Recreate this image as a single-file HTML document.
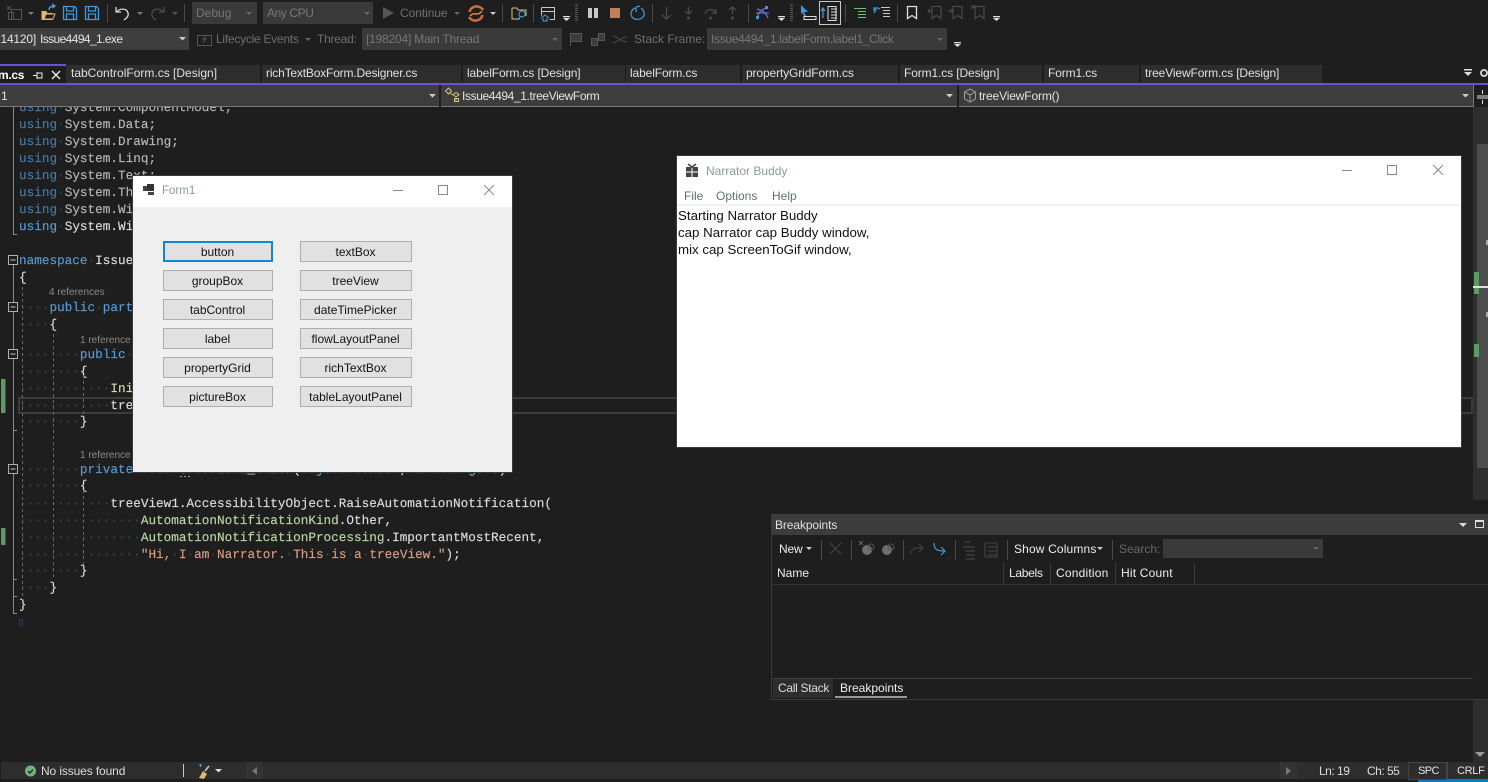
<!DOCTYPE html>
<html><head><meta charset="utf-8"><style>
html,body{margin:0;padding:0;background:#1e1e1e;width:1488px;height:782px;overflow:hidden}
body{position:relative;font-family:"Liberation Sans",sans-serif;font-size:12px;color:#dcdcdc}
.a{position:absolute}
.t{position:absolute;white-space:pre;line-height:16px;height:16px}
.dim{color:#6e6e6e}
.g{color:#7f7f7f}
.c{position:absolute;left:19px;white-space:pre;font-family:"Liberation Mono",monospace;font-size:12.7px;line-height:17px;height:17px;color:#dcdcdc;-webkit-text-stroke:.15px;text-rendering:geometricPrecision}
.c i{font-style:normal;color:#2c4a5c}.k{color:#569cd6}.k2{color:#457aa8}.d{color:#b8b8b8}.e{color:#b8d7a3}.s{color:#d69d85}.y{color:#dcdcaa}
.r{position:absolute;white-space:pre;font-size:10px;color:#8a8a8a;line-height:12px}
.tab{position:absolute;top:65px;height:18px;background:#2d2d2d;color:#e0e0e0;line-height:17px;padding-left:4px;box-sizing:border-box;white-space:pre;letter-spacing:-.12px}
.btn{position:absolute;box-sizing:border-box;height:21px;background:#e1e1e1;border:1px solid #adadad;color:#111;text-align:center;line-height:20px;font-size:12px;white-space:pre;padding-right:1px}
.s1{position:absolute;width:1px;background:#4a4a4a}
.n{font-size:13.3px;color:#111}
</style></head><body>

<!-- toolbars -->
<div class="a" style="left:192px;top:2px;width:65px;height:22px;background:#3a3a3a"></div>
<div class="a" style="left:263px;top:2px;width:110px;height:22px;background:#3a3a3a"></div>
<div class="t g" style="left:196px;top:5px;color:#777">Debug</div>
<div class="t g" style="left:267px;top:5px;color:#777;letter-spacing:-.4px">Any CPU</div>
<div class="t" style="left:400px;top:5px;color:#6f6f6f;letter-spacing:-.05px">Continue</div>
<div class="a" style="left:0;top:28px;width:189px;height:22px;background:#3e3e3e"></div>
<div class="t" style="left:-6px;top:31px;color:#e4e4e4;letter-spacing:-.2px">214120]</div>
<div class="t" style="left:40px;top:31px;color:#e4e4e4;letter-spacing:-.6px">Issue4494_1.exe</div>
<div class="t" style="left:216px;top:31px;color:#6f6f6f;letter-spacing:-.25px">Lifecycle Events</div>
<div class="t" style="left:317px;top:31px;color:#6f6f6f;letter-spacing:-.25px">Thread:</div>
<div class="a" style="left:362px;top:28px;width:200px;height:22px;background:#3a3a3a"></div>
<div class="t" style="left:366px;top:31px;color:#777;letter-spacing:-.2px">[198204] Main Thread</div>
<div class="t" style="left:634px;top:31px;color:#6f6f6f">Stack Frame:</div>
<div class="a" style="left:707px;top:28px;width:240px;height:22px;background:#3a3a3a"></div>
<div class="t" style="left:711px;top:31px;color:#777;letter-spacing:-.32px">Issue4494_1.labelForm.label1_Click</div>

<!-- code -->
<div class="c" style="top:99px"><span class="k2">using</span><i>·</i><span class="d">System.ComponentModel;</span></div>
<div class="c" style="top:116px"><span class="k2">using</span><i>·</i><span class="d">System.Data;</span></div>
<div class="c" style="top:133px"><span class="k2">using</span><i>·</i><span class="d">System.Drawing;</span></div>
<div class="c" style="top:150px"><span class="k2">using</span><i>·</i><span class="d">System.Linq;</span></div>
<div class="c" style="top:167px"><span class="k2">using</span><i>·</i><span class="d">System.Text;</span></div>
<div class="c" style="top:184px"><span class="k2">using</span><i>·</i><span class="d">System.Threading.Tasks;</span></div>
<div class="c" style="top:201px"><span class="k2">using</span><i>·</i><span class="d">System.Windows.Forms;</span></div>
<div class="c" style="top:218px"><span class="k">using</span><i>·</i>System.Windows.Forms;</div>
<div class="c" style="top:252px"><span class="k">namespace</span><i>·</i>Issue4494_1</div>
<div class="c" style="top:269px">{</div>
<div class="r" style="left:49px;top:287px">4 references</div>
<div class="c" style="top:299px"><i>····</i><span class="k">public</span><i>·</i><span class="k">partial</span><i>·</i><span class="k">class</span></div>
<div class="c" style="top:316px"><i>····</i>{</div>
<div class="r" style="left:80px;top:335px">1 reference</div>
<div class="c" style="top:346px"><i>········</i><span class="k">public</span><i>·</i>treeViewForm()</div>
<div class="c" style="top:363px"><i>········</i>{</div>
<div class="c" style="top:380px"><i>············</i><span class="y">Ini</span>tializeComponent();</div>
<div class="a" style="left:18px;top:397px;width:1455px;height:17px;box-sizing:border-box;border:2px solid #3c3c3c"></div>
<div class="c" style="top:397px"><i>············</i>treeView1.Text;</div>
<div class="c" style="top:413px"><i>········</i>}</div>
<div class="r" style="left:80px;top:450px">1 reference</div>
<div class="c" style="top:461px"><i>········</i><span class="k">private</span><i>·</i><span class="k">void</span><i>·</i>treeView1_Click(<span class="k">object</span><i>·</i>sender,<i>·</i><span style="color:#4ec9b0">EventArgs</span><i>·</i>e)</div>
<div class="c" style="top:477px"><i>········</i>{</div>
<div class="c" style="top:495px"><i>············</i>treeView1.AccessibilityObject.RaiseAutomationNotification(</div>
<div class="c" style="top:512px"><i>················</i><span class="e">AutomationNotificationKind</span>.Other,</div>
<div class="c" style="top:529px"><i>················</i><span class="e">AutomationNotificationProcessing</span>.ImportantMostRecent,</div>
<div class="c" style="top:546px"><i>················</i><span class="s">"Hi,<i>·</i>I<i>·</i>am<i>·</i>Narrator.<i>·</i>This<i>·</i>is<i>·</i>a<i>·</i>treeView."</span>);</div>
<div class="c" style="top:562px"><i>········</i>}</div>
<div class="c" style="top:579px"><i>····</i>}</div>
<div class="c" style="top:596px">}</div>

<!-- gutter + guides -->
<svg class="a" style="left:0;top:0" width="1488" height="782" fill="none">
<rect x="1" y="379" width="4.5" height="34" fill="#5b9a62"/><rect x="1" y="528" width="4.5" height="17" fill="#5b9a62"/>
<path d="M13.5 100V234.5H17M13.5 265V613.5H17M13.5 430.5H17M13.5 579.5H17M13.5 596.5H17" stroke="#8a8a8a"/>
<path d="M22.5 287V600M53.5 334V580M83.5 375V415M83.5 490V565" stroke="#666" stroke-dasharray="3 3"/>
<g fill="#1e1e1e" stroke="#b0b0b0"><rect x="8.500" y="255.500" width="9" height="9"/><rect x="8.500" y="302.500" width="9" height="9"/><rect x="8.500" y="349.500" width="9" height="9"/><rect x="8.500" y="464.500" width="9" height="9"/></g>
<path d="M10.500 260H15.500M10.500 307H15.500M10.500 354H15.500M10.500 469H15.500" stroke="#c8c8c8"/>
<rect x="19.500" y="619.500" width="3" height="6" stroke="#1f4050"/>
<path d="M180 476.500h2M184 476.500h2M188 476.500h2" stroke="#999"/>
</svg>

<!-- tabs -->
<div class="a" style="left:0;top:64px;width:66px;height:2px;background:#6d4fd3"></div>
<div class="t" style="left:-2px;top:67px;color:#fff;font-weight:bold;letter-spacing:-.3px">m.cs</div>
<div class="tab" style="left:66px;width:194px;padding-left:5px;letter-spacing:0">tabControlForm.cs [Design]</div>
<div class="tab" style="left:262px;width:199px;letter-spacing:-.18px">richTextBoxForm.Designer.cs</div>
<div class="tab" style="left:463px;width:162px">labelForm.cs [Design]</div>
<div class="tab" style="left:626px;width:114px">labelForm.cs</div>
<div class="tab" style="left:742px;width:156px">propertyGridForm.cs</div>
<div class="tab" style="left:900px;width:142px">Form1.cs [Design]</div>
<div class="tab" style="left:1044px;width:95px">Form1.cs</div>
<div class="tab" style="left:1141px;width:181px">treeViewForm.cs [Design]</div>
<div class="a" style="left:0;top:83px;width:1488px;height:2px;background:#6d4fd3"></div>

<!-- nav bar -->
<div class="a" style="left:0;top:85px;width:1488px;height:21px;background:#3d3d3d"></div>
<div class="a" style="left:0;top:106px;width:1473px;height:1px;background:#7a7a7a"></div>
<div class="a" style="left:439px;top:85px;width:2px;height:22px;background:#1e1e1e"></div>
<div class="a" style="left:957px;top:85px;width:2px;height:22px;background:#1e1e1e"></div>
<div class="a" style="left:1473px;top:85px;width:1px;height:22px;background:#7a7a7a"></div>
<div class="a" style="left:1474px;top:85px;width:14px;height:22px;background:#1e1e1e"></div>
<div class="t" style="left:1px;top:88px;color:#e4e4e4">1</div>
<div class="t" style="left:462px;top:88px;color:#e4e4e4;letter-spacing:-.38px">Issue4494_1.treeViewForm</div>
<div class="t" style="left:979px;top:88px;color:#e4e4e4;letter-spacing:-.15px">treeViewForm()</div>

<!-- scrollbar -->
<div class="a" style="left:1473px;top:107px;width:15px;height:393px;background:#2e2e2e"></div>
<div class="a" style="left:1477px;top:144px;width:11px;height:324px;background:#4d4d4d"></div>
<div class="a" style="left:1474px;top:272px;width:5px;height:22px;background:#5b9a62"></div>
<div class="a" style="left:1474px;top:344px;width:5px;height:13px;background:#5b9a62"></div>
<div class="a" style="left:1473px;top:286px;width:15px;height:2px;background:#dedede"></div>
<div class="a" style="left:1486px;top:240px;width:2px;height:5px;background:#aaa"></div>
<div class="a" style="left:1486px;top:312px;width:2px;height:5px;background:#aaa"></div>

<!-- toolbar icons -->
<svg class="a" style="left:0;top:0" width="1488" height="107" fill="none">
<!-- new -->
<g stroke="#555"><rect x="11.500" y="9.500" width="10" height="10"/><rect x="8.500" y="12.500" width="5" height="7"/><path d="M7 6l4 4M11 6l-4 4"/></g>
<g fill="#7a7a7a"><path d="M28 12h6l-3 3zM137 12h6l-3 3z"/></g><path d="M172 12h6l-3 3z" fill="#555"/>
<!-- open -->
<path d="M42 11.500h4l1 2h5v6H42z" fill="#dcb67a" stroke="#dcb67a"/><path d="M44 19l2-5h9l-2 5z" fill="#1e1e1e" stroke="#dcb67a"/><path d="M49 10c0-3 2-4 5-4M52 4l3 2-3 2" stroke="#4a9fe0" stroke-width="1.300"/>
<!-- save -->
<g stroke="#3f97dc" stroke-width="1.300"><path d="M63.500 6.500h11l2 2v11h-13zM66.500 7v4h7V7M66.500 19v-5h7v5"/><path d="M85.500 6.500h11l2 2v11h-13zM88.500 7v4h7V7M88.500 19v-5h7v5"/></g>
<path d="M107.500 4v18M184.500 4v18M502.500 4v18M533.500 4v18M652.500 4v18M748.500 4v18M845.500 4v18M897.500 4v18" stroke="#4a4a4a"/>
<!-- undo/redo -->
<path d="M117 12c2-4 10-4 11 1 1 3-1 5-4 7M116 7v5h5" stroke="#d8d8d8" stroke-width="1.300"/>
<path d="M163 12c-2-4-10-4-11 1-1 3 1 5 4 7M164 7v5h-5" stroke="#4d4d4d" stroke-width="1.300"/>
<!-- continue -->
<path d="M383 7l11 6-11 6z" fill="#555"/><path d="M454 12h6l-3 3z" fill="#666"/>
<path d="M246 12h6l-3 3zM364 12h6l-3 3z" fill="#6a6a6a"/>
<path d="M469.500 12c1-5 7-7 11-4.500 1 .6 2 1.500 2.500 2.500M482.500 15c-1 5-7 7-11 4.500-1-.6-2-1.500-2.500-2.500" stroke="#c9703c" stroke-width="2.500"/><path d="M470 16c4-5 8 1 12-5" stroke="#d88a50" stroke-width="1.500"/><path d="M490 12h6l-3 3z" fill="#ccc"/>
<!-- find -->
<path d="M512 8h5l1 2h8v6M512 8v11h8" stroke="#d7c27a"/><circle cx="522" cy="14" r="3" stroke="#4a9fe0"/><path d="M520 17l-3 3" stroke="#4a9fe0"/>
<!-- window -->
<path d="M541.500 7.500h13v12h-5M541.500 7.500v8M541.500 11.500h13" stroke="#c8c8c8"/><path d="M541 18l4-3 4 3M543 18v3h4v-3" stroke="#4a9fe0"/>
<path d="M563 16h7v1.200h-7zM563 18l3.500 3 3.500-3zM778 16h7v1.200h-7zM778 18l3.500 3 3.500-3zM993 16h7v1.200h-7zM993 18l3.500 3 3.500-3zM954 42h7v1.200h-7zM954 44l3.500 3 3.500-3z" fill="#ddd"/>
<path d="M576.500 4v18M791.500 4v18" stroke="#555" stroke-dasharray="1 1" stroke-width="3"/>
<!-- pause stop restart -->
<rect x="588" y="8" width="4" height="10" fill="#c8c8c8"/><rect x="594" y="8" width="4" height="10" fill="#c8c8c8"/><rect x="610" y="8" width="10" height="10" fill="#c27f5c"/>
<path d="M641 8c4 3 4 8 1 10-3 2-8 2-10-1-2-3-1-7 3-9M636 7v5M636 7l4-1" stroke="#3f97dc" stroke-width="1.300"/>
<!-- step -->
<g stroke="#4a4a4a" stroke-width="1.300"><path d="M666.500 7v12M662 15l4.500 4 4.500-4M688.500 7v7M685 11l3.500 3 3.500-3M732.500 7v7M729 10l3.500-3 3.500 3M705 14c1-5 8-6 11-1M716 9v4h-4"/></g><circle cx="688.500" cy="18" r="1.500" fill="#4a4a4a"/><circle cx="732.500" cy="18" r="1.500" fill="#4a4a4a"/><circle cx="710.500" cy="18" r="1.500" fill="#4a4a4a"/>
<!-- diag -->
<path d="M757 18c3-9 6-9 11-10M757 9c3 1 8 2 11 9" stroke="#7a63d8" stroke-width="1.300"/><path d="M756 13h13" stroke="#3f97dc"/><rect x="756" y="16" width="3" height="3" fill="#3f97dc"/><rect x="765" y="6" width="3" height="3" fill="#3f97dc"/>
<!-- cursor -->
<path d="M801 5l7 7h-4l2 4-2 0-2-4-1 3z" fill="#3f97dc"/><path d="M804 16.500h12v3h-12z" stroke="#ddd"/>
<rect x="819.500" y="1.500" width="21" height="23" stroke="#c8c8c8"/>
<path d="M823 18v-9M821 11l2-3 2 3" stroke="#3f97dc" stroke-width="1.300"/><path d="M828 6.500h8v14h-8zM831 9h6M831 12h6M831 15h6M831 18h6" stroke="#ddd"/>
<path d="M854 8.500h12M858 11.500h8M858 14.500h8M858 17.500h8" stroke="#6fc16f"/>
<path d="M881 7.500h9M883 10.500h7M883 13.500h7M883 16.500h7" stroke="#c8c8c8"/><path d="M880 9c-5-3-7 1-5 4M874 7v3h3" stroke="#3f97dc" stroke-width="1.200"/>
<!-- bookmarks -->
<path d="M907.500 6.500h9v12l-4.500-3-4.500 3z" stroke="#e0e0e0" stroke-width="1.300"/>
<g stroke="#4a4a4a" stroke-width="1.200"><path d="M932 6.500h9v12l-4.500-3-4.500 3zM928 11h4M928 11l2-2M928 11l2 2"/><path d="M953 6.500h9v12l-4.500-3-4.500 3zM948 11h5M953 11l-2-2M953 11l-2 2"/><path d="M975 6.500h9v12l-4.500-3-4.500 3zM971 5l4 4M975 5l-4 4"/></g>
<!-- row 2 -->
<path d="M197.500 35.500h14v10h-14zM203 43l3-4h-3l3-3" stroke="#555"/>
<path d="M305 38h6l-3 3z" fill="#666"/><path d="M552 38h6l-3 3zM937 38h6l-3 3z" fill="#666"/>
<path d="M179 37h7l-3.500 3.500z" fill="#ccc"/>
<path d="M570.500 33v13" stroke="#555"/><rect x="570.500" y="33.500" width="11" height="8" fill="#3c3c3c" stroke="#555"/><rect x="591.500" y="38.500" width="6" height="7" fill="#3c3c3c" stroke="#555"/><rect x="598.500" y="33.500" width="6" height="7" fill="#3c3c3c" stroke="#555"/>
<path d="M613 36c5 1 9 6 14 6M613 43c5-1 9-6 14-6" stroke="#4a4a4a"/>
<!-- tabs -->
<path d="M33 75.500h4M37 73h5v5h-5zM37 72v7" stroke="#eee"/><path d="M52 71l8 8M60 71l-8 8" stroke="#eee" stroke-width="1.400"/>
<path d="M1464 69h8v1.500h-8zM1464 72h8l-4 4z" fill="#ddd"/><circle cx="1484" cy="73" r="3" stroke="#ccc" stroke-width="2"/>
<!-- nav -->
<path d="M429 94h7l-3.500 3.500zM946 94h7l-3.500 3.500zM1462 94h7l-3.500 3.500z" fill="#ccc"/>
<path d="M445.500 91l3-3 3 3-3 3zM450 93l3 2M453 94.500l3-2 3 2-3 2.500zM456 98v2.500" stroke="#d7c27a"/><rect x="454.500" y="98.500" width="4" height="3" stroke="#d7c27a"/>
<path d="M964.500 92l5.500-3 5.500 3v7l-5.500 3-5.500-3zM964.500 92l5.500 3 5.500-3M970 95v7" stroke="#9a9a9a"/>
<path d="M1477 96h11M1477 98h11M1482.500 90v4M1482.500 100v4" stroke="#ddd"/>
<path d="M1478 118l4.500-4 4.500 4z" fill="#8a8a8a"/>
</svg>

<!-- Form1 -->
<div class="a" style="left:132px;top:175px;width:381px;height:298px;box-sizing:border-box;border:1px solid #3a3a3a;background:#efefef">
<div class="a" style="left:0;top:0;width:379px;height:31px;background:#fff"></div>
<svg class="a" style="left:9px;top:7px" width="14" height="14"><rect x="1" y="3" width="4" height="5" fill="#444"/><rect x="5" y="1" width="7" height="7" fill="#333"/><rect x="6" y="9" width="6" height="3" fill="#444"/></svg>
<div class="t" style="left:29px;top:7px;color:#8a9a9a;font-size:11.5px">Form1</div>
<svg class="a" style="left:251px;top:1px" width="120" height="30" fill="none" stroke="#888"><path d="M9 13.500h10"/><rect x="54.500" y="8.500" width="9" height="9"/><path d="M100 8l10 10M110 8l-10 10"/></svg>
</div>
<div class="btn" style="left:163px;top:241px;width:110px;border:2px solid #1086d8;line-height:18px">button</div>
<div class="btn" style="left:163px;top:270px;width:110px">groupBox</div>
<div class="btn" style="left:163px;top:299px;width:110px">tabControl</div>
<div class="btn" style="left:163px;top:328px;width:110px">label</div>
<div class="btn" style="left:163px;top:357px;width:110px">propertyGrid</div>
<div class="btn" style="left:163px;top:386px;width:110px">pictureBox</div>
<div class="btn" style="left:300px;top:241px;width:112px">textBox</div>
<div class="btn" style="left:300px;top:270px;width:112px">treeView</div>
<div class="btn" style="left:300px;top:299px;width:112px">dateTimePicker</div>
<div class="btn" style="left:300px;top:328px;width:112px">flowLayoutPanel</div>
<div class="btn" style="left:300px;top:357px;width:112px">richTextBox</div>
<div class="btn" style="left:300px;top:386px;width:112px">tableLayoutPanel</div>

<!-- Narrator -->
<div class="a" style="left:676px;top:155px;width:786px;height:293px;box-sizing:border-box;border:1px solid #3a3a3a;background:#fff"></div>
<div class="a" style="left:677px;top:204px;width:784px;height:2px;background:#f0f0f0"></div>
<svg class="a" style="left:685px;top:163px" width="14" height="15" fill="none"><rect x="1" y="4" width="12" height="10" fill="#444"/><path d="M1 9h12M7 4v10" stroke="#fff"/><path d="M3 1l4 3 4-3" stroke="#444" stroke-width="1.500"/></svg>
<div class="t" style="left:706px;top:163px;color:#8a9a9a">Narrator Buddy</div>
<svg class="a" style="left:1340px;top:160px" width="110" height="22" fill="none" stroke="#888"><path d="M2 10.500h10"/><rect x="47.500" y="5.500" width="9" height="9"/><path d="M93 5l10 10M103 5l-10 10"/></svg>
<div class="t" style="left:684px;top:188px;color:#5f7070">File</div>
<div class="t" style="left:716px;top:188px;color:#5f7070">Options</div>
<div class="t" style="left:772px;top:188px;color:#5f7070">Help</div>
<div class="t n" style="left:678px;top:208px">Starting Narrator Buddy</div>
<div class="t n" style="left:678px;top:225px">cap Narrator cap Buddy window,</div>
<div class="t n" style="left:678px;top:242px">mix cap ScreenToGif window,</div>

<!-- Breakpoints -->
<div class="a" style="left:771px;top:514px;width:717px;height:186px;background:#1e1e1e;border-left:1px solid #3a3a3a;box-sizing:border-box;border-bottom:1px solid #3a3a3a"></div>
<div class="a" style="left:771px;top:514px;width:717px;height:21px;background:#3c3c3c"></div>
<div class="t" style="left:775px;top:517px;color:#e0e0e0;letter-spacing:-.1px">Breakpoints</div>
<div class="t" style="left:779px;top:541px;color:#eee;letter-spacing:-.2px">New</div>
<div class="t" style="left:1014px;top:541px;color:#eee;letter-spacing:.15px">Show Columns</div>
<div class="t" style="left:1119px;top:541px;color:#666">Search:</div>
<div class="a" style="left:1163px;top:539px;width:160px;height:19px;background:#3a3a3a"></div>
<div class="t" style="left:777px;top:565px;color:#eee">Name</div>
<div class="t" style="left:1009px;top:565px;color:#eee;letter-spacing:-.3px">Labels</div>
<div class="t" style="left:1056px;top:565px;color:#eee;letter-spacing:.2px">Condition</div>
<div class="t" style="left:1121px;top:565px;color:#eee;letter-spacing:.2px">Hit Count</div>
<div class="a" style="left:772px;top:584px;width:716px;height:1px;background:#333"></div>
<div class="a" style="left:772px;top:678px;width:701px;height:1px;background:#3f3f3f"></div>
<div class="a" style="left:773px;top:679px;width:60px;height:19px;background:#2d2d2d"></div>
<div class="a" style="left:835px;top:679px;width:72px;height:19px;background:#1e1e1e;border-bottom:2px solid #9a9a9a;box-sizing:border-box"></div>
<div class="t" style="left:778px;top:680px;color:#ddd;letter-spacing:-.3px">Call Stack</div>
<div class="t" style="left:840px;top:680px;color:#eee">Breakpoints</div>
<svg class="a" style="left:0;top:510px" width="1488" height="90" fill="none">
<path d="M1459 13h8l-4 4z" fill="#ddd"/><rect x="1475.500" y="10.500" width="8" height="7" stroke="#ddd"/><path d="M1475 11.500h9" stroke="#ddd"/>
<path d="M806 37h6l-3 3zM1097 37h6l-3 3z" fill="#ccc"/><path d="M1313 37h6l-3 3z" fill="#666"/>
<path d="M821.500 30v20M851.500 30v20M903.500 30v20M955.500 30v20M1007.500 30v20M1112.500 30v20" stroke="#4a4a4a"/>
<path d="M830 33l11 11M841 33l-11 11" stroke="#444"/>
<circle cx="867" cy="40" r="5" fill="#6e6e6e"/><circle cx="871" cy="37" r="3" stroke="#555"/><path d="M859 31l4 4M863 31l-4 4" stroke="#666"/>
<circle cx="887" cy="40" r="5" fill="#6e6e6e"/><circle cx="891" cy="37" r="3" stroke="#555"/>
<path d="M911 44c0-5 4-7 12-6M919 34l4 4-4 4" stroke="#444"/>
<path d="M934 33c0 6 2 8 11 8M941 37l4 4-4 4" stroke="#3f97dc" stroke-width="1.200"/>
<path d="M963 37h12M966 41h9M966 45h9M966 49h9M964 32h6" stroke="#4a4a4a"/>
<path d="M985 33h12v14h-12zM988 37h9M988 41h9M988 45h9" stroke="#444"/>
<path d="M1003.500 53v21M1050.500 53v21M1115.500 53v21M1194.500 53v21" stroke="#3a3a3a"/>
</svg>
<div class="a" style="left:1473px;top:700px;width:15px;height:62px;background:#2e2e2e"></div>
<svg class="a" style="left:1473px;top:745px" width="15" height="15"><path d="M2 7h10l-5 5z" fill="#999"/></svg>

<!-- status bar -->
<div class="a" style="left:1px;top:762px;width:1487px;height:17px;background:#2d2d2d"></div>
<div class="a" style="left:1418px;top:779px;width:70px;height:3px;background:#007acc"></div>
<svg class="a" style="left:0;top:760px" width="1488" height="22" fill="none">
<circle cx="30.500" cy="11" r="5.500" fill="#6fb57a"/><path d="M28 11l2 2 3-3.500" stroke="#1e1e1e" stroke-width="1.300"/>
<path d="M183.500 4v13" stroke="#bcd"/>
<path d="M199 18l4-7 4 3-3 5z" fill="#d8b878"/><path d="M205 11l4-5" stroke="#ccc" stroke-width="1.500"/><path d="M199 5h3M200.500 4v3" stroke="#5aa0e0"/>
<path d="M215 9h7l-3.500 3.500z" fill="#ddd"/>
<rect x="246" y="2" width="17" height="17" fill="#333"/><path d="M257 7v8l-5-4z" fill="#777"/>
<rect x="1280" y="2" width="17" height="17" fill="#333"/><path d="M1286 7v8l5-4z" fill="#777"/>
<rect x="1408.500" y="2.500" width="38" height="17" stroke="#444"/><path d="M1447.500 2v17" stroke="#444"/>
</svg>
<div class="t" style="left:41px;top:763px;color:#dcdcdc;letter-spacing:-.12px">No issues found</div>
<div class="t" style="left:1319px;top:763px;color:#dcdcdc;letter-spacing:-.5px">Ln: 19</div>
<div class="t" style="left:1367px;top:763px;color:#dcdcdc;letter-spacing:-.5px">Ch: 55</div>
<div class="t" style="left:1418px;top:763px;color:#e4e4e4;font-size:11px;letter-spacing:-.6px">SPC</div>
<div class="t" style="left:1457px;top:763px;color:#e4e4e4;font-size:11px;letter-spacing:-.3px">CRLF</div>
</body></html>
